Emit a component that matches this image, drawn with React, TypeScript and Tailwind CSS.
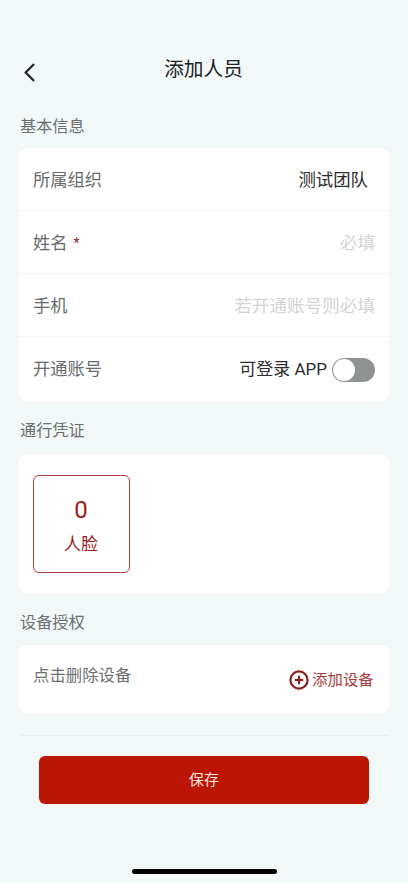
import { ChevronLeft } from 'lucide-react';

const FONT = "font-['Roboto','Noto_Sans_CJK_SC',sans-serif]";

const SectionTitle = ({ text, className }: { text: string; className: string }) => (
  <div className={`px-5 text-[16.2px] leading-[22px] text-[#6a7072] ${className}`}>{text}</div>
);

const Row = ({ children, border = true }: { children: React.ReactNode; border?: boolean }) => (
  <div className={`flex h-[63px] items-center justify-between pl-[14px] pr-[13.5px] pt-px ${border ? 'border-b border-[#f4f6f7]' : ''}`}>
    {children}
  </div>
);

const Label = ({ text }: { text: string }) => (
  <span className="text-[17.3px] leading-6 text-[#666b6d]">{text}</span>
);

export default function App() {
  return (
    <div className={`flex h-[883px] w-[408px] flex-col overflow-hidden bg-[#f2f7f8] ${FONT}`}>
      {/* header */}
      <div className="relative flex h-[116px] shrink-0 items-start justify-center pr-px pt-[58px]">
        <ChevronLeft className="absolute left-[14px] top-[57px] h-[31px] w-[31px] text-[#26292b]" strokeWidth={1.9} />
        <span className="text-[19.7px] leading-6 text-[#202324]">添加人员</span>
      </div>

      <SectionTitle text="基本信息" className="" />
      <div className="ml-[19px] mr-[19.5px] mt-[10px] h-[254px] shrink-0 rounded-[8px] bg-white">
        <Row>
          <Label text="所属组织" />
          <span className="pr-[7px] text-[17.4px] leading-6 text-[#2b2d2e]">测试团队</span>
        </Row>
        <Row>
          <span className="flex items-center">
            <Label text="姓名" />
            <span className="ml-[6px] text-[14px] leading-6 text-[#a02020]">*</span>
          </span>
          <span className="text-[17.6px] leading-6 text-[#d2d4d5]">必填</span>
        </Row>
        <Row>
          <Label text="手机" />
          <span className="text-[17.6px] leading-6 text-[#d2d4d5]">若开通账号则必填</span>
        </Row>
        <Row border={false}>
          <Label text="开通账号" />
          <span className="flex items-center">
            <span className="text-[17px] leading-6 text-[#2b2d2e]">可登录 APP</span>
            <span className="ml-[5px] mt-[2px] flex h-6 w-[43px] items-center rounded-full bg-[#909393] pl-[1px]">
              <span className="h-[22px] w-[22px] rounded-full bg-white" />
            </span>
          </span>
        </Row>
      </div>

      <SectionTitle text="通行凭证" className="mt-[18px]" />
      <div className="ml-[19px] mr-[19.5px] mt-[12px] h-[140px] shrink-0 rounded-[8px] bg-white pl-[13.5px] pt-[21px]">
        <div className="flex h-[98px] w-[97px] flex-col items-center rounded-[6px] border border-[#b04040] pt-[20px] text-[#9e1a1a]">
          <span className="text-[24px] leading-[28px]">0</span>
          <span className="mt-[8px] text-[17px] leading-6">人脸</span>
        </div>
      </div>

      <SectionTitle text="设备授权" className="mt-[18px]" />
      <div className="ml-[19px] mr-[19.5px] mt-[11px] flex h-[69px] shrink-0 items-start justify-between rounded-[8px] bg-white pl-[14px] pr-[15px]">
        <span className="mt-[19px] text-[16.4px] leading-6 text-[#6a6f71]">点击删除设备</span>
        <span className="mt-[23px] flex items-center">
          <svg viewBox="0 0 20 20" className="h-5 w-5" fill="none" stroke="#8e1c1c" strokeWidth="2.2">
            <circle cx="10" cy="10" r="8.6" />
            <path d="M10 5.8v8.4M5.8 10h8.4" />
          </svg>
          <span className="ml-[3px] text-[15.3px] leading-6 text-[#a83a3a]">添加设备</span>
        </span>
      </div>

      <div className="mx-[19.5px] mt-[21px] border-t border-[#e9edee]" />

      <div className="mx-[39px] mt-[20px] flex h-[48px] items-center justify-center rounded-[6px] bg-[#bb1604]">
        <span className="text-[15px] text-[#fbe4e0]">保存</span>
      </div>

      <div className="mt-[65px] flex justify-center">
        <div className="h-[5px] w-[145px] rounded-full bg-black" />
      </div>
    </div>
  );
}
